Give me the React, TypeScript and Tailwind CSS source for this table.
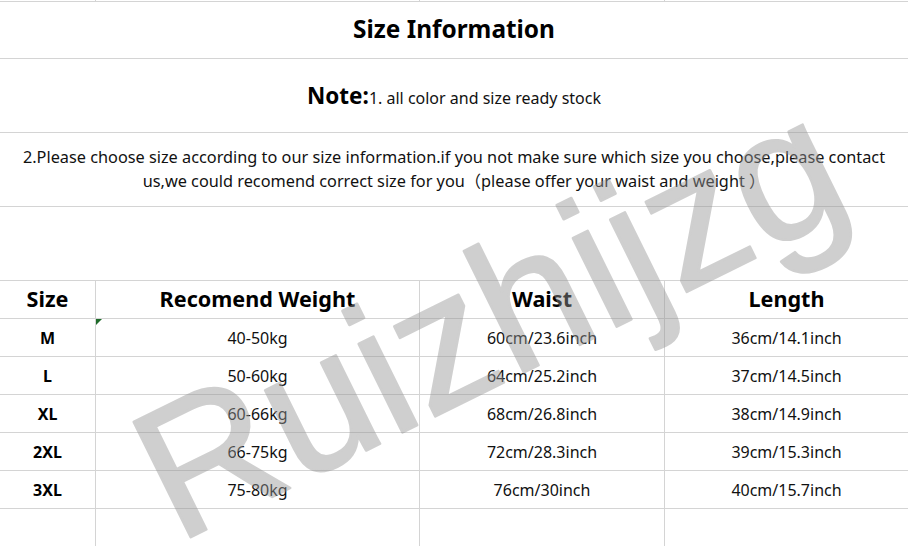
import React from "react";

const font = { fontFamily: '"Noto Sans", "Noto Sans CJK SC", sans-serif' };

const rows = [
  ["M", "40-50kg", "60cm/23.6inch", "36cm/14.1inch"],
  ["L", "50-60kg", "64cm/25.2inch", "37cm/14.5inch"],
  ["XL", "60-66kg", "68cm/26.8inch", "38cm/14.9inch"],
  ["2XL", "66-75kg", "72cm/28.3inch", "39cm/15.3inch"],
  ["3XL", "75-80kg", "76cm/30inch", "40cm/15.7inch"],
];

function Cols({ children, h }: { children?: React.ReactNode; h: string }) {
  return (
    <div className={`grid grid-cols-[96px_324px_245px_1fr] border-b border-[#d4d4d4] ${h}`}>
      {children}
    </div>
  );
}

export default function App() {
  return (
    <div className="relative w-[908px] h-[546px] overflow-hidden bg-white text-[#111]" style={font}>
      <div className="grid grid-cols-[96px_324px_245px_1fr] h-[2px] border-b border-[#d4d4d4]">
        <div className="border-r border-[#d4d4d4]" />
        <div className="border-r border-[#d4d4d4]" />
        <div className="border-r border-[#d4d4d4]" />
        <div />
      </div>
      <div className="h-[57px] border-b border-[#d4d4d4] flex items-center justify-center pb-[2px]">
        <span className="text-[24.4px] font-bold text-black">Size Information</span>
      </div>
      <div className="h-[74px] border-b border-[#d4d4d4] flex items-center justify-center pt-[1px]">
        <span className="text-[22.5px] font-bold text-black">Note:</span>
        <span className="text-[16px] pt-[4px]">1. all color and size ready stock</span>
      </div>
      <div className="h-[74px] border-b border-[#d4d4d4] flex items-center justify-center text-center text-[16.3px] leading-[24px] pb-[1px]">
        <p className="w-[890px]">
          2.Please choose size according to our size information.if you not make sure which size you choose,please contact us,we could recomend correct size for you（please offer your waist and weight ）
        </p>
      </div>
      <div className="h-[74px] border-b border-[#d4d4d4]" />
      <Cols h="h-[38px]">
        {["Size", "Recomend Weight", "Waist", "Length"].map((t, i) => (
          <div
            key={t}
            className={`flex items-center justify-center text-[21.6px] font-bold text-black ${i < 3 ? "border-r border-[#d4d4d4]" : ""}`}
          >
            {t}
          </div>
        ))}
      </Cols>
      {rows.map((r, ri) => (
        <Cols key={r[0]} h="h-[38px]">
          {r.map((t, i) => (
            <div
              key={i}
              className={`relative flex items-center justify-center ${i === 0 ? "text-[16px] font-bold text-black" : "text-[16px]"} ${i < 3 ? "border-r border-[#d4d4d4]" : ""}`}
            >
              {ri === 0 && i === 1 && (
                <span className="absolute left-0 top-0 w-0 h-0 border-t-[6px] border-r-[6px] border-t-[#1f6b2a] border-r-transparent" />
              )}
              {t}
            </div>
          ))}
        </Cols>
      ))}
      <div className="grid grid-cols-[96px_324px_245px_1fr] h-[40px]">
        <div className="border-r border-[#d4d4d4]" />
        <div className="border-r border-[#d4d4d4]" />
        <div className="border-r border-[#d4d4d4]" />
        <div />
      </div>
      <svg className="absolute inset-0 pointer-events-none" width="908" height="546">
        <g opacity="0.45">
          <text
            x="177"
            y="544"
            transform="rotate(-26.3 177 544)"
            fontFamily='"Liberation Sans", Arial, sans-serif'
            fontSize="187"
            fill="rgb(150,150,150)"
            stroke="rgb(150,150,150)"
            strokeWidth="2.5"
            strokeLinejoin="round"
          >
            Ruizhijzg
          </text>
        </g>
      </svg>
    </div>
  );
}
